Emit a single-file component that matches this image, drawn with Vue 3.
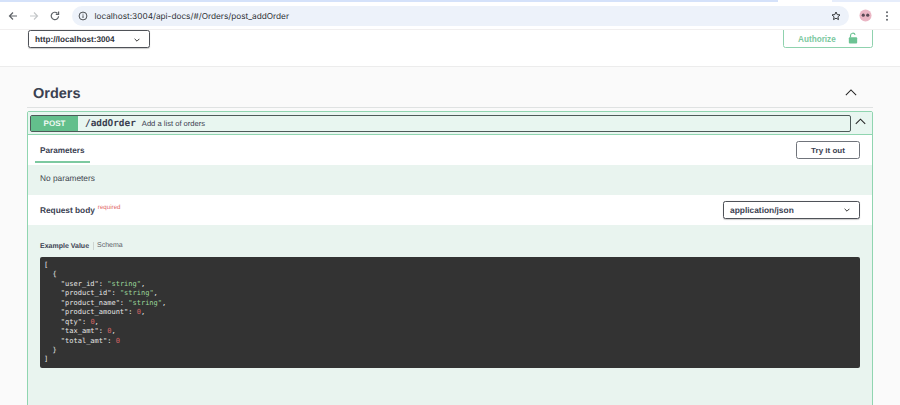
<script setup>
const codeLines = [
  [{ t: '[', c: 'p' }],
  [{ t: '  {', c: 'p' }],
  [{ t: '    "user_id"', c: 'k' }, { t: ': ', c: 'p' }, { t: '"string"', c: 's' }, { t: ',', c: 'p' }],
  [{ t: '    "product_id"', c: 'k' }, { t: ': ', c: 'p' }, { t: '"string"', c: 's' }, { t: ',', c: 'p' }],
  [{ t: '    "product_name"', c: 'k' }, { t: ': ', c: 'p' }, { t: '"string"', c: 's' }, { t: ',', c: 'p' }],
  [{ t: '    "product_amount"', c: 'k' }, { t: ': ', c: 'p' }, { t: '0', c: 'n' }, { t: ',', c: 'p' }],
  [{ t: '    "qty"', c: 'k' }, { t: ': ', c: 'p' }, { t: '0', c: 'n' }, { t: ',', c: 'p' }],
  [{ t: '    "tax_amt"', c: 'k' }, { t: ': ', c: 'p' }, { t: '0', c: 'n' }, { t: ',', c: 'p' }],
  [{ t: '    "total_amt"', c: 'k' }, { t: ': ', c: 'p' }, { t: '0', c: 'n' }],
  [{ t: '  }', c: 'p' }],
  [{ t: ']', c: 'p' }],
]
</script>

<template>
  <div class="window">
    <div class="tabstrip">
      <div class="strip-left"></div>
      <div class="strip-tab"></div>
      <div class="strip-right"></div>
    </div>
    <header class="toolbar">
      <svg class="nav" viewBox="0 0 12 12" width="12" height="12"><path d="M10 6H2.5M6 2.5 2.5 6 6 9.5" fill="none" stroke="#5f6368" stroke-width="1.2"/></svg>
      <svg class="nav" viewBox="0 0 12 12" width="12" height="12"><path d="M2 6h7.5M6 2.5 9.5 6 6 9.5" fill="none" stroke="#c4c7c9" stroke-width="1.2"/></svg>
      <svg class="nav" viewBox="0 0 12 12" width="12" height="12"><path d="M9.6 6.2A3.7 3.7 0 1 1 8.4 3.2M9.6 1.6v2.8H6.8" fill="none" stroke="#5f6368" stroke-width="1.2"/></svg>
      <div class="omnibox">
        <svg class="info" viewBox="0 0 12 12" width="10" height="10"><circle cx="6" cy="6" r="4.7" fill="none" stroke="#3c4043" stroke-width="1.1"/><path d="M6 5.2v3.2M6 3.3v1" stroke="#3c4043" stroke-width="1.1"/></svg>
        <span class="url">localhost:3004/api-docs/#/Orders/post_addOrder</span>
        <svg class="star" viewBox="0 0 12 12" width="10" height="10"><path d="m6 1.2 1.45 3.1 3.35.4-2.5 2.3.68 3.3L6 8.65 3.02 10.3l.68-3.3-2.5-2.3 3.35-.4z" fill="none" stroke="#26282b" stroke-width="1.1"/></svg>
      </div>
      <svg class="avatar" viewBox="0 0 14 14" width="13" height="13">
        <circle cx="7" cy="7" r="6.5" fill="#eab6c4"/>
        <circle cx="4.6" cy="6.6" r="1.7" fill="#5a4a55"/>
        <circle cx="9.4" cy="6.6" r="1.7" fill="#5a4a55"/>
      </svg>
      <svg class="more" viewBox="0 0 4 12" width="4" height="12"><circle cx="2" cy="2.2" r="1" fill="#5f6368"/><circle cx="2" cy="6" r="1" fill="#5f6368"/><circle cx="2" cy="9.8" r="1" fill="#5f6368"/></svg>
    </header>

    <section class="schemes">
      <div class="select server">
        <span>http://localhost:3004</span>
        <svg viewBox="0 0 10 6" width="6" height="4"><path d="m1 1 4 4 4-4" fill="none" stroke="#303030" stroke-width="1.6"/></svg>
      </div>
      <button class="authorize">
        <span>Authorize</span>
        <svg viewBox="0 0 12 14" width="10" height="12"><path d="M3 6.5V4a2.8 2.8 0 0 1 5.5-.7" fill="none" stroke="#6cc393" stroke-width="1.4"/><rect x="1" y="6" width="10" height="7.5" rx="1.2" fill="#6cc393"/></svg>
      </button>
    </section>

    <main class="content">
      <div class="tag">
        <h3>Orders</h3>
        <svg viewBox="0 0 14 8" width="12" height="7"><path d="m1 7 6-6 6 6" fill="none" stroke="#222" stroke-width="1.2"/></svg>
      </div>

      <div class="opblock">
        <div class="summary">
          <div class="summary-main">
            <span class="method">POST</span>
            <span class="path">/addOrder</span>
            <span class="desc">Add a list of orders</span>
          </div>
          <svg class="op-arrow" viewBox="0 0 14 8" width="11" height="7"><path d="m1 7 6-6 6 6" fill="none" stroke="#222" stroke-width="1.3"/></svg>
        </div>

        <div class="row params-head">
          <div class="tab">Parameters</div>
          <button class="try">Try it out</button>
        </div>
        <div class="tint no-params">No parameters</div>
        <div class="row body-head">
          <div class="body-title">Request body<sup>required</sup></div>
          <div class="select media">
            <span>application/json</span>
            <svg viewBox="0 0 10 6" width="6" height="4"><path d="m1 1 4 4 4-4" fill="none" stroke="#303030" stroke-width="1.6"/></svg>
          </div>
        </div>
        <div class="tint example">
          <div class="tabs">
            <span class="active">Example Value</span>
            <span class="schema">Schema</span>
          </div>
          <pre class="code"><div v-for="(line, i) in codeLines" :key="i" class="line"><span v-for="(part, j) in line" :key="j" :class="part.c">{{ part.t }}</span></div></pre>
        </div>
      </div>
    </main>
  </div>
</template>

<style>
html, body { margin: 0; background: #fafafa; overflow: hidden; }
</style>

<style scoped>
.window {
  width: 900px;
  height: 405px;
  overflow: hidden;
  display: flex;
  flex-direction: column;
  font-family: "Liberation Sans", Arial, sans-serif;
  text-rendering: geometricPrecision;
  color: #3b4151;
  background: #fafafa;
}
.tabstrip { display: flex; height: 2px; flex: none; }
.strip-left { width: 778px; background: #d5e2fa; }
.strip-tab { width: 54px; background: #fff; }
.strip-right { flex: 1; background: #e6edfb; }
.toolbar {
  height: 28px;
  box-sizing: border-box;
  flex: none;
  display: flex;
  align-items: center;
  background: #fff;
  border-bottom: 1px solid #f1efef;
  padding-left: 7px;
}
.nav { margin-right: 9px; flex: none; }
.toolbar .nav:nth-child(3) { margin-right: 10px; }
.omnibox {
  width: 777px;
  height: 20px;
  margin-left: 1px;
  display: flex;
  align-items: center;
  background: #edf2fa;
  border-radius: 10px;
  padding: 0 8px 0 5px;
  box-sizing: border-box;
}
.info { margin-left: 1px; flex: none; }
.url {
  margin-left: 6.5px;
  font-family: Inter, "Liberation Sans", sans-serif;
  font-size: 8.25px;
  color: #2c2f33;
  flex: 1;
  white-space: nowrap;
}
.avatar { margin-left: 10px; flex: none; }
.more { margin-left: 13px; flex: none; }

.schemes {
  height: 37px;
  flex: none;
  box-sizing: border-box;
  display: flex;
  align-items: flex-end;
  justify-content: space-between;
  padding: 0 27px 18px 28px;
  background: #fff;
  border-bottom: 1px solid #ececec;
  overflow: hidden;
}
.select {
  box-sizing: border-box;
  height: 18px;
  border: 1.5px solid #4f5258;
  border-radius: 2.5px;
  display: flex;
  align-items: center;
  justify-content: space-between;
  font-weight: 700;
  font-size: 8.2px;
  background: #fff;
  color: #3b4151;
  box-shadow: 0 0.5px 1px rgba(0, 0, 0, 0.2);
}
.server { width: 122px; padding: 1px 9px 0 6px; color: #30333b; }
.media { width: 137px; padding: 0 9px 0 6px; font-size: 8.4px; }
.authorize {
  flex: none;
  width: 90px;
  height: 30px;
  box-sizing: border-box;
  border: 1.5px solid #8fd2ae;
  border-radius: 2.5px;
  background: #fff;
  display: flex;
  align-items: flex-end;
  padding: 0 14px 3px 14px;
  justify-content: space-between;
  font: 700 8.2px "Liberation Sans", Arial, sans-serif;
  color: #7cc9a0;
}
.authorize span { margin-bottom: 0; }

.content { flex: 1; padding: 0 27px; min-height: 0; }
.tag {
  height: 41px;
  box-sizing: border-box;
  border-bottom: 1px solid #dfe2e2;
  display: flex;
  align-items: center;
  justify-content: space-between;
  padding: 11px 16px 0 6px;
}
.tag h3 {
  margin: 2px 0 0;
  font-size: 14.5px;
  line-height: 18px;
  font-weight: 700;
  color: #3b4151;
}
.opblock {
  margin-top: 3px;
  box-sizing: border-box;
  height: 300px;
  border: 1px solid #90d5b0;
  border-radius: 2px;
  background: #e9f4ef;
}
.summary {
  height: 23px;
  box-sizing: border-box;
  padding: 3px 0 2px 2px;
  display: flex;
  align-items: stretch;
  background: #e8f6f0;
  border-bottom: 1px solid #90d5b0;
}
.summary-main {
  width: 821px;
  display: flex;
  align-items: center;
  box-sizing: border-box;
  border: 1px solid #4d5a58;
  border-radius: 2px;
}
.method {
  width: 47px;
  height: 100%;
  display: flex;
  align-items: center;
  justify-content: center;
  background: #63bf8c;
  color: #f2faf6;
  font-weight: 700;
  font-size: 8px;
}
.path {
  margin-left: 7px;
  font-family: "DejaVu Sans Mono", monospace;
  font-size: 9.4px;
  font-weight: 700;
  color: #3b4151;
}
.desc { margin-left: 6px; font-size: 7.6px; color: #3b4151; }
.op-arrow { margin: 3px 0 0 4px; }

.row {
  display: flex;
  align-items: center;
  justify-content: space-between;
  background: #fff;
  padding-right: 12px;
}
.params-head {
  height: 30px;
  box-sizing: border-box;
  align-items: flex-start;
}
.tab {
  margin-left: 7px;
  width: 55px;
  height: 28px;
  box-sizing: border-box;
  padding-left: 5px;
  line-height: 32px;
  font-size: 8.2px;
  font-weight: 700;
  border-bottom: 2px solid #7cc9a0;
}
.try {
  margin-top: 6px;
  box-sizing: border-box;
  width: 64px;
  height: 18px;
  padding: 0;
  border: 1.5px solid #70747b;
  border-radius: 2.5px;
  background: #fff;
  color: #3b4151;
  font: 700 8px "Liberation Sans", Arial, sans-serif;
}
.tint { background: #e9f4ef; }
.no-params {
  height: 30px;
  box-sizing: border-box;
  padding-left: 12px;
  line-height: 27px;
  font-size: 8.3px;
  color: #43474f;
}
.body-head { height: 30px; padding-left: 12px; }
.body-title { font-size: 8.3px; font-weight: 700; }
.body-title sup {
  margin-left: 3px;
  font-size: 6.2px;
  font-weight: 400;
  color: #e26a6a;
  vertical-align: 4px;
  line-height: 0;
}
.example { padding: 16px 12px 0; }
.tabs { display: flex; align-items: center; font-size: 7px; height: 10px; color: #3b4151; }
.active { font-weight: 700; }
.schema {
  margin-left: 3.5px;
  padding-left: 3.5px;
  border-left: 1px solid #ced5d1;
  line-height: 8px;
  color: #5c6068;
}
.code {
  margin: 6px 0 0;
  box-sizing: border-box;
  height: 111px;
  padding: 4px 4px;
  background: #333;
  border-radius: 2px;
  font-family: "DejaVu Sans Mono", monospace;
  font-size: 7px;
  line-height: 9.45px;
  color: #e8e8e8;
}
.line { height: 9.45px; white-space: pre; }
.p, .k { color: #e6e6e6; }
.s { color: #9bd79b; }
.n { color: #d36363; }
</style>
